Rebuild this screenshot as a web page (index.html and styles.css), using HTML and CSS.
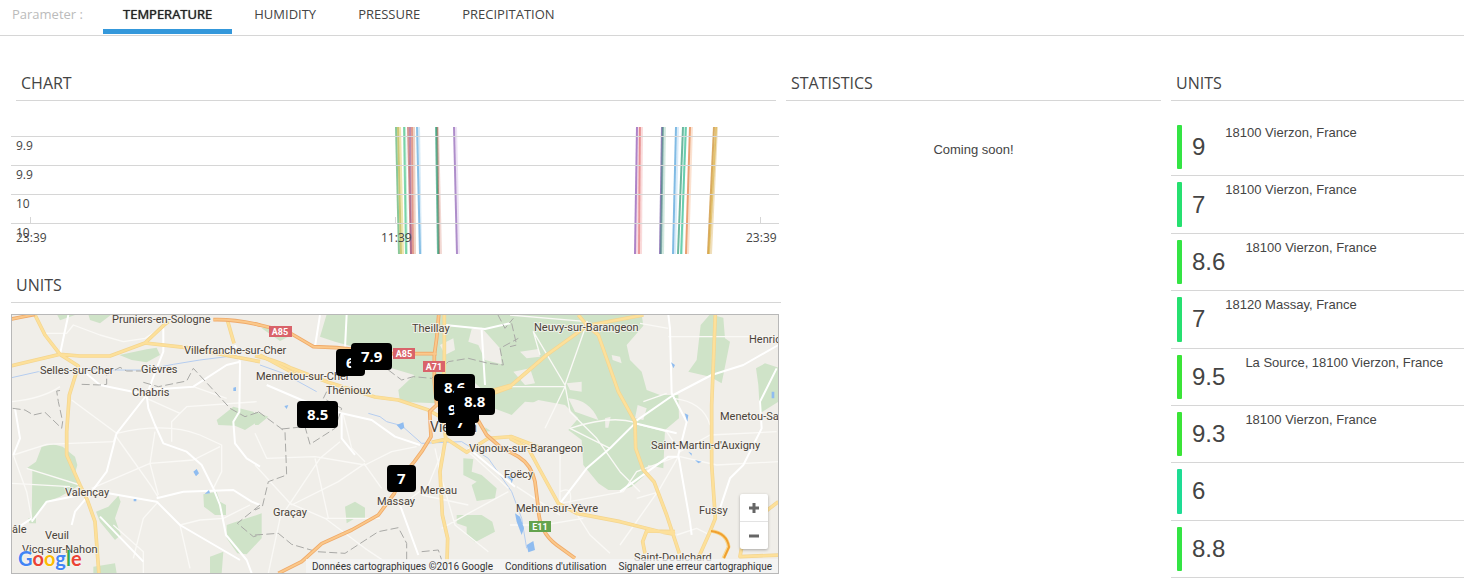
FILE: index.html
```html
<!DOCTYPE html>
<html lang="en">
<head>
<meta charset="utf-8">
<title>Weather units</title>
<link rel="stylesheet" href="styles.css">
</head>
<body>
<nav class="tabs">
  <span class="tabs-label">Parameter :</span>
  <a class="tab tab-active" href="#temperature">TEMPERATURE</a>
  <a class="tab" href="#humidity">HUMIDITY</a>
  <a class="tab" href="#pressure">PRESSURE</a>
  <a class="tab" href="#precipitation">PRECIPITATION</a>
</nav>
<main class="board">
  <div class="col-main">
    <section class="panel-chart">
      <h2 class="title title-inset">CHART</h2>
      <svg class="chart" viewBox="0 0 768 127" role="img" aria-label="Temperature over time">
        <g class="series-halo">
          <path stroke="#e8d98a" d="M389 0L392 127"/><path stroke="#b6ead0" d="M394 0L396 127"/><path stroke="#eac0a8" d="M403 0L404 127"/><path stroke="#c6e2f5" d="M408 0L410 127"/><path stroke="#ecc8c0" d="M427 0L430 127"/><path stroke="#e6d5ef" d="M445 0L448 127"/><path stroke="#f6c9d6" d="M628 0L626 127"/><path stroke="#f8cccc" d="M631 0L630 127"/><path stroke="#bfe0d2" d="M654 0L652 127"/><path stroke="#c9e3f6" d="M667 0L664 127"/><path stroke="#b5ecd8" d="M674 0L671 127"/><path stroke="#f9d5be" d="M681 0L677 127"/><path stroke="#ead2a0" d="M706 0L700 127"/>
        </g>
        <g class="series">
          <path stroke="#59b06c" d="M385 0L388 127"/><path stroke="#b5b03c" d="M387 0L390 127"/>
          <path stroke="#4fc48c" d="M393 0L395 127"/>
          <path stroke="#c46b62" d="M397 0L400 127"/><path stroke="#a05a8c" d="M399 0L400 127"/><path stroke="#d4705c" d="M401 0L402 127"/>
          <path stroke="#5aa6da" d="M406 0L409 127"/>
          <path stroke="#8d6a55" d="M426 0L428 127"/><path stroke="#2ea37a" d="M425 0L427 127"/>
          <path stroke="#8b5cb4" d="M443 0L446 127"/>
          <path stroke="#8a4fb0" d="M626 0L624 127"/><path stroke="#e06c6c" d="M629 0L628 127"/>
          <path stroke="#6b4fa0" d="M651 0L649 127"/><path stroke="#4d8c86" d="M652 0L650 127"/>
          <path stroke="#4a9ed8" d="M665 0L662 127"/>
          <path stroke="#2e9a78" d="M672 0L667 127"/><path stroke="#3fbf96" d="M675 0L670 127"/>
          <path stroke="#e07838" d="M679 0L675 127"/>
          <path stroke="#c98722" d="M703 0L697 127"/><path stroke="#d8ae42" d="M705 0L698 127"/>
        </g>
        <path class="grid" d="M0 9.500H768M0 38.500H768M0 67.500H768M0 96.500H768M19.500 90V96M384.500 90V96M749.500 90V96"/>
        <g class="axis">
          <text x="5" y="23">9.9</text><text x="5" y="52">9.9</text><text x="5" y="81">10</text><text x="5" y="110">10</text>
          <text x="5" y="115">23:39</text><text x="370" y="115">11:39</text><text x="735" y="115">23:39</text>
        </g>
      </svg>
    </section>
    <section class="panel-map">
      <h2 class="title">UNITS</h2>
      <div class="map">
        <svg class="map-canvas" viewBox="12 315 766 258" preserveAspectRatio="xMidYMid slice" role="img" aria-label="Map of the Vierzon area">
          <defs>
            <g id="motorway">
              <path transform="translate(0 305) scale(.33333)" d="M30 43L65 36L105 28M640 44Q700 42 780 60"/>
              <path transform="translate(255 305) scale(.33333)" d="M0 57Q60 70 105 84Q150 110 175 125L245 128L300 134L410 146H545M552 20L545 100L538 150V230L545 300L524 320L528 395L500 440L478 470L440 515L418 565L370 630L290 675L200 716L140 770L70 805M545 300L610 285L660 330L695 390L735 425L790 455Q830 480 840 530L850 610Q852 680 905 720L960 760"/>
            </g>
            <g id="primary">
              <path transform="translate(0 305) scale(.33333)" d="M35 182L180 148L235 183L208 270L200 380V450L240 540L262 585L285 650L297 810M105 30L135 90L180 148L240 153H330L435 114L490 62L505 50M435 114L560 128L780 170M682 45L702 115M780 150L900 215"/>
              <path transform="translate(255 305) scale(.33333)" d="M0 152Q60 165 110 190L220 232L360 276L430 285L520 315L555 335M568 20V180L560 300L572 400L555 500L562 630L578 700L576 770M530 412L575 402L635 442L700 400L770 395L860 430M610 340L660 285L770 245"/>
              <path transform="translate(510 305) scale(.33333)" d="M-100 270L5 240L110 150L232 62L400 30M205 30L232 62L265 90L325 260L375 350L377 430L400 495L432 530L470 630L508 745M616 28L605 300V480L616 640L600 680L560 770M0 400L55 430L90 495L145 595L200 625L330 650L450 680L495 688M495 680L410 678L398 710L405 745M740 665L700 700L690 755L810 750M740 640L805 590M605 678Q650 685 656 725L640 760"/>
            </g>
          </defs>
          <rect class="land" x="12" y="315" width="766" height="258"/>
          <g class="forest">
            <path transform="translate(0 305) scale(.33333)" d="M80 490L108 470L125 425L160 418L188 425L225 455L232 480L225 505L240 540L180 575L140 590L120 620L95 650L97 495ZM85 640L108 635V655H88ZM358 150L440 133L470 128L480 150L440 172L395 165ZM288 620L325 605L355 572L362 590L345 640L362 690L345 705L300 650ZM610 568L650 560L660 590L678 600V630H645L612 605ZM650 345L700 305L760 320L780 345L735 375L705 362L655 360ZM680 660L740 640L785 625V700L740 748L712 745L680 700ZM630 755L670 740L665 805H630ZM280 785L345 775L350 805H280ZM172 30H225L180 46ZM265 28H335L300 55L270 45Z"/>
            <path transform="translate(255 305) scale(.33333)" d="M215 28L725 24L1160 28L1165 62L1115 120L1125 165L1160 200L1175 255L1215 270H1270L1272 340L1230 375L1225 490L1180 480L1165 515L1130 545L1100 555L1060 555L1030 535L985 480L980 405L940 375L970 340L930 300L850 285L800 310L780 370L690 380L700 270L650 225L540 295L435 290L430 255L478 210L395 185L435 135L330 135L240 110L195 95ZM0 320L40 335L10 360H0ZM0 635L12 700L0 712ZM270 605L300 590L330 608V640H300L275 655ZM625 460L655 462L650 500L680 510L725 550L720 580L665 588L650 540L665 530L625 510ZM605 630H680L712 650L720 680L660 712L635 690V665L605 655ZM20 70L60 62L110 90L75 108Z"/>
            <path transform="translate(510 305) scale(.33333)" d="M600 28L640 38L645 100L660 110L635 235L600 215L535 200L560 165L572 60ZM738 190L765 175L805 188V290L750 325L745 240Z"/>
          </g>
          <g class="land">
            <path transform="translate(255 305) scale(.33333)" d="M640 110L650 72L680 68L735 130L740 178L690 165L670 120ZM555 120L595 100L600 135L570 150ZM770 330L810 290L870 295L895 340L830 370L790 425L740 400L680 360L690 300Z"/>
            <path transform="translate(510 305) scale(.33333)" d="M30 140L85 132L90 155L50 160ZM10 200L60 190L75 235L45 240ZM170 235L215 230V260L180 255ZM175 280Q240 285 265 345L195 320ZM383 300L410 310L400 345L375 340ZM305 150L330 155L335 175L308 165ZM285 340L302 335L295 368H286Z"/>
          </g>
          <g class="river">
            <path transform="translate(0 305) scale(.33333)" d="M35 218L115 200L185 208L240 190L350 195L430 195L520 178L600 165L680 155L760 165M780 180L850 205L950 260"/>
            <path transform="translate(255 305) scale(.33333)" d="M340 325L375 335L395 350L440 362L500 415L620 410L700 460L770 560L800 640L815 730"/>
          </g>
          <g class="minor">
            <path transform="translate(0 305) scale(.33333)" d="M40 450L140 418L340 410L350 385L215 285M350 385Q500 350 600 390L665 420V500L640 550M345 390L455 545L475 578M275 550L450 475L580 465L660 425M465 380L450 475L475 570M80 490L240 540M35 535L210 545M440 280L540 325L515 350V410M540 325L560 305L770 290M340 660L430 740V805M475 590L430 640L400 760M540 660L600 645L670 640L750 600M540 660L570 790M40 450L80 560L95 640M135 85H200L220 60L300 90L370 110L435 100L490 65M580 245L680 280M35 290Q130 280 180 245"/>
            <path transform="translate(255 305) scale(.33333)" d="M0 385L35 460L180 455L330 480L410 440L485 425M330 480L380 550M255 410L195 460L105 595L75 640L40 805M210 640L330 730L420 790M105 595L210 640L375 640M180 460L220 640M0 480L110 600M110 600L250 530L330 475M265 330L290 430L330 470M540 430L560 520L600 660L700 740M570 420L520 540L440 600M560 670L650 620L760 560M500 570L640 600M640 440L760 550"/>
            <path transform="translate(510 305) scale(.33333)" d="M0 30L232 50L165 240L70 80L90 150M165 240L180 320L260 400L330 500L390 560M0 245H165L105 370M300 430L180 370Q300 330 375 352M475 70L390 55M475 95H800M375 355L470 380L510 440L600 390L800 380M470 265L400 290M150 595V430M150 560Q190 540 180 595L240 690L300 745M150 595L340 560L380 500L500 455M380 580L450 560M20 545L150 630M0 660H100L220 640M510 455L620 480L805 470M505 455L450 550L330 720M490 280Q580 290 600 360M500 690L560 670L600 690"/>
          </g>
          <g class="secondary">
            <path transform="translate(0 305) scale(.33333)" d="M205 30L190 100L180 148M490 70V140L470 190L440 270L445 310L465 360L490 415L560 440L605 480L640 550L660 600L678 690L740 765L755 805M440 270L350 385L320 500L275 560L225 620L215 660M240 190L300 240L420 265M440 255L580 245L680 180L720 170M705 120L720 170L718 320L700 350L705 415L740 460L780 485M300 560L470 590L540 660L720 765M470 580L550 560L700 555L755 590L780 600M45 310L60 400L40 450M95 650L140 590L240 570M300 635L430 770M35 680L95 640"/>
            <path transform="translate(255 305) scale(.33333)" d="M195 30L180 125M275 28L270 130M0 60M35 240L140 285L260 325L350 345L420 395L495 420M260 325V400L300 450M570 60L690 72L765 55M680 75L690 240M640 430L780 545M435 600L490 750"/>
            <path transform="translate(510 305) scale(.33333)" d="M475 30L480 70L485 265L530 350L505 450L540 650L545 690M375 350L490 270L605 210L700 180L805 120M375 355L300 430L230 490L150 595M375 355L500 385M330 560L475 455L505 455M800 190L750 290L755 370L700 480L660 520L630 610"/>
          </g>
          <g class="boundary">
            <path transform="translate(0 305) scale(.33333)" d="M38 310L75 315L100 330L135 322L185 370L188 350L175 290L170 258L190 255M245 238L300 240L320 238V210M345 195L360 187L380 198H430M430 232L475 245L510 238L560 228L580 190L640 255L690 310L735 335L780 320M780 600L712 655L760 695L780 690"/>
            <path transform="translate(255 305) scale(.33333)" d="M10 320L75 368L90 380L95 510L40 530L22 605L0 615M80 372L150 365L165 418L240 370L260 310L205 280L215 260M400 195L440 225L475 215L530 220L580 170L640 160L700 175L745 180L735 130L790 100M728 28L750 70L775 40M0 690L70 685L110 718L185 740L270 745L370 680L430 668L455 715V765M500 740L550 735L560 765"/>
            <path transform="translate(510 305) scale(.33333)" d="M5 55L20 120L0 125"/>
          </g>
          <g class="water">
            <path transform="translate(0 305) scale(.33333)" d="M580 500L590 492L597 505L588 514ZM614 567L627 555L630 565ZM700 248L708 246V258H700ZM401 582H409V589H401Z"/>
            <path transform="translate(255 305) scale(.33333)" d="M425 360L445 352L448 368L438 374ZM88 303L100 300L95 312ZM755 515L775 510L770 528Z"/>
            <path transform="translate(510 305) scale(.33333)" d="M483 172L495 180L490 190ZM524 325L535 330L532 350ZM0 515L10 520L5 535ZM15 625L30 635L42 670L35 690L20 650ZM50 720L70 708L75 735L55 742ZM555 465L575 470L565 475ZM785 260H793V280H785ZM535 440L545 445V452Z"/>
          </g>
          <use href="#primary" class="primary-edge"/><use href="#primary" class="primary-fill"/>
          <use href="#motorway" class="motorway-edge"/><use href="#motorway" class="motorway-fill"/>
          <path class="ringroad" d="M711 531Q727 533 729 547L724 558"/>
          <g class="shield">
            <rect x="269" y="326" width="23" height="11"/><rect x="393" y="348" width="22" height="11"/><rect x="423" y="361" width="22" height="11"/>
            <rect class="shield-e" x="529" y="521" width="22" height="11"/>
            <text x="280" y="335">A85</text><text x="404" y="357">A85</text><text x="434" y="370">A71</text><text x="540" y="530">E11</text>
          </g>
          <g class="places">
            <text x="112" y="323">Pruniers-en-Sologne</text><text x="184" y="354">Villefranche-sur-Cher</text>
            <text x="40" y="374">Selles-sur-Cher</text><text x="141" y="373">Gièvres</text><text x="132" y="396">Chabris</text>
            <text x="256" y="380">Mennetou-sur-Cher</text><text x="326" y="394">Thénioux</text><text x="412" y="332">Theillay</text>
            <text x="534" y="331">Neuvy-sur-Barangeon</text><text x="749" y="343">Henrichemont</text><text x="720" y="420">Menetou-Salon</text>
            <text x="651" y="449">Saint-Martin-d'Auxigny</text><text x="469" y="452">Vignoux-sur-Barangeon</text><text x="504" y="478">Foëcy</text>
            <text x="420" y="494">Mereau</text><text x="377" y="505">Massay</text><text x="273" y="516">Graçay</text>
            <text x="516" y="512">Mehun-sur-Yèvre</text><text x="699" y="514">Fussy</text><text x="634" y="561">Saint-Doulchard</text>
            <text x="65" y="496">Valençay</text><text x="45" y="539">Veuil</text><text x="22" y="553">Vicq-sur-Nahon</text><text x="12" y="533">âle</text>
            <text class="town" x="430" y="432">Vierzon</text>
          </g>
        </svg>
        <span class="pin pin-1">6</span>
        <span class="pin pin-2">7.9</span>
        <span class="pin pin-3">8.5</span>
        <span class="pin pin-4">7</span>
        <span class="pin pin-5">9.5</span>
        <span class="pin pin-6">8.6</span>
        <span class="pin pin-7">8.8</span>
        <span class="pin pin-8">7</span>
        <div class="logo"><span class="blue">G</span><span class="red">o</span><span class="yellow">o</span><span class="blue">g</span><span class="green">l</span><span class="red">e</span></div>
        <div class="zoom">
          <button class="zoom-btn" type="button" aria-label="Zoom in"><svg width="12" height="12" viewBox="0 0 12 12"><path d="M1 6H11M6 1V11"/></svg></button>
          <button class="zoom-btn" type="button" aria-label="Zoom out"><svg width="12" height="12" viewBox="0 0 12 12"><path d="M1 6H11"/></svg></button>
        </div>
        <div class="credits"><span>Données cartographiques ©2016 Google</span><a href="#terms">Conditions d'utilisation</a><a href="#report">Signaler une erreur cartographique</a></div>
      </div>
    </section>
  </div>
  <section class="col-stats">
    <h2 class="title">STATISTICS</h2>
    <p class="soon">Coming soon!</p>
  </section>
  <section class="col-units">
    <h2 class="title">UNITS</h2>
    <ul class="units">
      <li class="unit"><i class="level warm"></i><b class="value">9</b><span class="place">18100 Vierzon, France</span></li>
      <li class="unit"><i class="level cool"></i><b class="value">7</b><span class="place">18100 Vierzon, France</span></li>
      <li class="unit"><i class="level warm"></i><b class="value">8.6</b><span class="place">18100 Vierzon, France</span></li>
      <li class="unit"><i class="level cool"></i><b class="value">7</b><span class="place">18120 Massay, France</span></li>
      <li class="unit"><i class="level hot"></i><b class="value">9.5</b><span class="place">La Source, 18100 Vierzon, France</span></li>
      <li class="unit"><i class="level hot"></i><b class="value">9.3</b><span class="place">18100 Vierzon, France</span></li>
      <li class="unit"><i class="level cold"></i><b class="value">6</b></li>
      <li class="unit"><i class="level warm"></i><b class="value">8.8</b></li>
    </ul>
  </section>
</main>
</body>
</html>
```
FILE: styles.css
```css
* { box-sizing: border-box; }
body { margin: 0; background: #fff; color: #444; font: 13px/15px "Liberation Sans", Arial, sans-serif; }

.tabs { display: flex; align-items: flex-start; gap: 2px; height: 36px; padding-left: 12px; border-bottom: 1px solid #d6d6d6; font: 13px/18px "Open Sans", sans-serif; }
.tabs-label { width: 89px; padding-top: 5px; color: #bbb; }
.tab { padding: 5px 20px 6px; border-bottom: 5px solid transparent; color: #444; text-decoration: none; }
.tab-active { border-color: #3498db; color: #222; text-shadow: 0 0 1px #222; }

.board { display: grid; grid-template-columns: 775fr 385fr 293fr; padding: 37px 0 0 11px; }
.col-main { padding-right: 5px; }
.col-stats { padding-right: 10px; }
.title { margin: 0; height: 28px; padding-left: 5px; border-bottom: 1px solid #d6d6d6; font: 16px/20px "Open Sans", sans-serif; color: #444; }
.title-inset { margin: 0 5px; }

.chart { display: block; width: calc(100% - 2px); margin-top: 26px; }
.series path { fill: none; stroke-width: 2; opacity: .7; }
.series-halo path { fill: none; stroke-width: 2; opacity: .7; }
.grid { fill: none; stroke: #d6d6d6; }
.axis { font: 12px "Open Sans", sans-serif; fill: #444; }

.panel-map { padding-top: 21px; }
.map { position: relative; height: 260px; margin: 11px 2px 0 0; border: 1px solid #b8b8b8; overflow: hidden; }
.map-canvas { display: block; width: 100%; height: 100%; }
.land { fill: #f0eee9; }
.forest { fill: #cfe3c8; }
.water { fill: #8fbcf0; }
.river { fill: none; stroke: #b5cdf0; stroke-width: 3; }
.minor { fill: none; stroke: #faf9f6; stroke-width: 4; stroke-linejoin: round; }
.secondary { fill: none; stroke: #fff; stroke-width: 6; stroke-linejoin: round; }
.boundary { fill: none; stroke: #a9a9a6; stroke-width: 3; stroke-dasharray: 24 10; }
.primary-edge, .primary-fill, .motorway-edge, .motorway-fill { fill: none; stroke-linejoin: round; }
.primary-edge { stroke: #f3d590; stroke-width: 11; }
.primary-fill { stroke: #fde09a; stroke-width: 7; }
.motorway-edge { stroke: #efaa6a; stroke-width: 11; }
.motorway-fill { stroke: #fbc88a; stroke-width: 6; }
.ringroad { fill: none; stroke: #f0a030; stroke-width: 2; }
.shield rect { fill: #d9636a; }
.shield .shield-e { fill: #64a34e; }
.shield text { fill: #fff; font: 700 9px Roboto, sans-serif; text-anchor: middle; }
.places { fill: #4a4238; stroke: #f6f4f0; stroke-width: 2; stroke-opacity: .8; paint-order: stroke; font: 11px Roboto, sans-serif; }
.town { font-size: 14px; }

.pin { position: absolute; padding: 3px 10px; border-radius: 4px; background: #000; color: #fff; font: 700 15px/21px "Open Sans", sans-serif; }
.pin-1 { left: 324px; top: 34px; }
.pin-2 { left: 339px; top: 28px; }
.pin-3 { left: 285px; top: 86px; }
.pin-4 { left: 434px; top: 94px; }
.pin-5 { left: 426px; top: 81px; }
.pin-6 { left: 422px; top: 59px; }
.pin-7 { left: 442px; top: 73px; }
.pin-8 { left: 375px; top: 150px; }

.logo { position: absolute; left: 6px; bottom: 3px; font: 700 20px/24px Lato, sans-serif; text-shadow: 0 0 1px #fff, 0 0 2px #fff; }
.blue { color: #4285f4; }
.red { color: #ea4335; }
.yellow { color: #fbbc05; }
.green { color: #34a853; }

.zoom { position: absolute; right: 10px; bottom: 24px; width: 28px; border-radius: 2px; background: #fff; box-shadow: 0 1px 3px rgba(0, 0, 0, .3); }
.zoom-btn { display: flex; align-items: center; justify-content: center; width: 28px; height: 27px; padding: 0; border: 0; background: none; }
.zoom-btn + .zoom-btn { height: 28px; border-top: 1px solid #e3e3e3; }
.zoom-btn path { fill: none; stroke: #666; stroke-width: 3; }

.credits { position: absolute; right: 0; bottom: 0; display: flex; gap: 12px; padding: 2px 6px 0; background: rgba(245, 245, 245, .75); color: #333; font: 10px/12px Roboto, sans-serif; }
.credits a { color: inherit; text-decoration: none; }

.soon { margin: 41px 0 0; text-align: center; }

.units { display: grid; grid-auto-rows: 1fr; min-height: 459px; margin: 18px 0 0; padding: 0; list-style: none; }
.unit { display: flex; padding: 6px 0 6px 6px; border-bottom: 1px solid #d6d6d6; }
.level { width: 5px; border-radius: 1px; }
.hot { background: #3be438; }
.warm { background: #34e444; }
.cool { background: #26e070; }
.cold { background: #1edc94; }
.value { align-self: center; margin: 0 20px 0 10px; font-size: 24px; font-weight: 400; line-height: 28px; }
```
